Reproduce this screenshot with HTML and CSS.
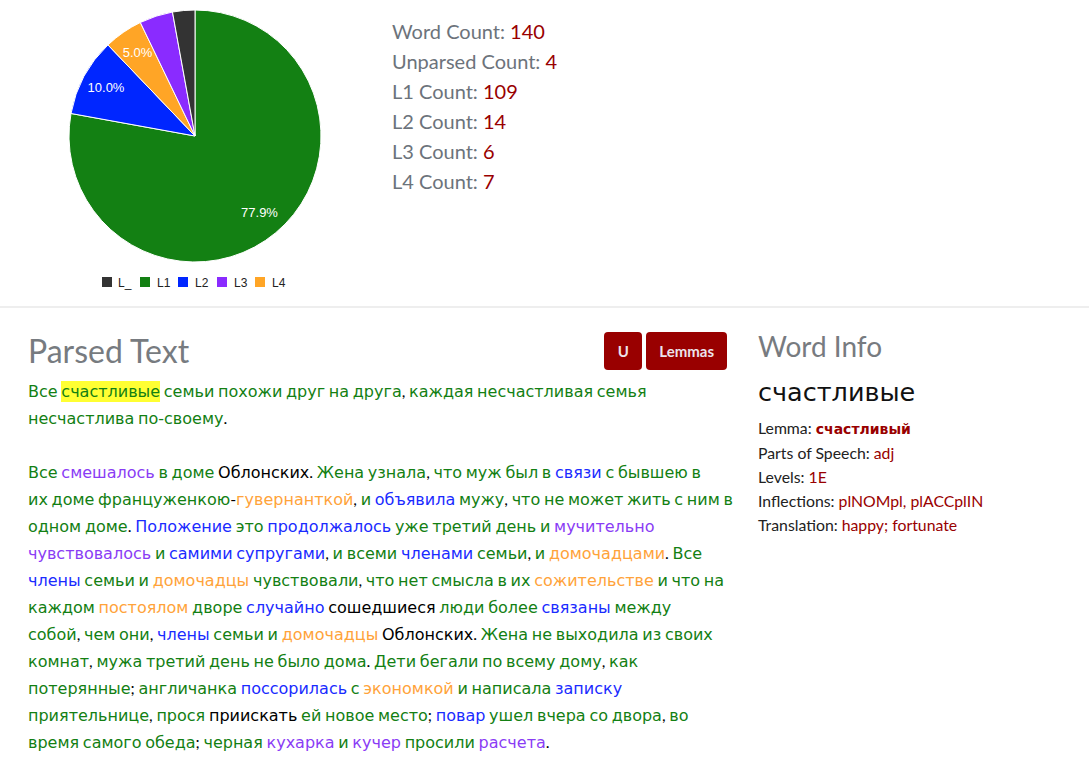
FILE: index.html
```html
<!DOCTYPE html>
<html lang="ru">
<head>
<meta charset="utf-8">
<title>Parsed Text</title>
<link rel="stylesheet" href="styles.css">
</head>
<body>
<section class="summary">
  <div class="chart">
    <svg width="380" height="300" viewBox="0 0 380 300" xmlns="http://www.w3.org/2000/svg">
      <g stroke="#fff" stroke-width="1">
        <path d="M195,136 L195,10 A126,126 0 1 1 71.02,113.49 Z" fill="#138013"/>
        <path d="M195,136 L71.02,113.49 A126,126 0 0 1 107.93,44.92 Z" fill="#0026ff"/>
        <path d="M195,136 L107.93,44.92 A126,126 0 0 1 140.33,22.48 Z" fill="#ffa526"/>
        <path d="M195,136 L140.33,22.48 A126,126 0 0 1 172.49,12.03 Z" fill="#8a2bff"/>
        <path d="M195,136 L172.49,12.03 A126,126 0 0 1 195,10 Z" fill="#333333"/>
      </g>
      <g class="slice-label" text-anchor="middle">
        <text x="259.5" y="217">77.9%</text>
        <text x="106" y="92">10.0%</text>
        <text x="137.5" y="57">5.0%</text>
      </g>
      <g class="legend">
        <rect x="102" y="277" width="10" height="10" fill="#333333"/>
        <text x="118" y="287">L_</text>
        <rect x="140" y="277" width="10" height="10" fill="#138013"/>
        <text x="157" y="287">L1</text>
        <rect x="178" y="277" width="10" height="10" fill="#0026ff"/>
        <text x="195" y="287">L2</text>
        <rect x="217" y="277" width="10" height="10" fill="#8a2bff"/>
        <text x="234" y="287">L3</text>
        <rect x="255" y="277" width="10" height="10" fill="#ffa526"/>
        <text x="272" y="287">L4</text>
      </g>
    </svg>
  </div>
  <ul class="stats">
    <li>Word Count: <span class="num">140</span></li>
    <li>Unparsed Count: <span class="num">4</span></li>
    <li>L1 Count: <span class="num">109</span></li>
    <li>L2 Count: <span class="num">14</span></li>
    <li>L3 Count: <span class="num">6</span></li>
    <li>L4 Count: <span class="num">7</span></li>
  </ul>
</section>

<main class="workspace">
  <section class="parsed">
    <div class="parsed-head">
      <h2 class="title">Parsed Text</h2>
      <div class="actions">
        <button class="btn btn-u">U</button>
        <button class="btn">Lemmas</button>
      </div>
    </div>
    <div class="text">
      <p><span class="g">Все</span> <span class="g hl">счастливые</span> <span class="g">семьи</span> <span class="g">похожи</span> <span class="g">друг</span> <span class="g">на</span> <span class="g">друга</span>, <span class="g">каждая</span> <span class="g">несчастливая</span> <span class="g">семья</span><br>
      <span class="g">несчастлива</span> <span class="g">по-своему</span>.</p>
      <p><span class="g">Все</span> <span class="p">смешалось</span> <span class="g">в</span> <span class="g">доме</span> <span class="k">Облонских</span>. <span class="g">Жена</span> <span class="g">узнала</span>, <span class="g">что</span> <span class="g">муж</span> <span class="g">был</span> <span class="g">в</span> <span class="b">связи</span> <span class="g">с</span> <span class="g">бывшею</span> <span class="g">в</span><br>
      <span class="g">их</span> <span class="g">доме</span> <span class="g">француженкою</span>-<span class="o">гувернанткой</span>, <span class="g">и</span> <span class="b">объявила</span> <span class="g">мужу</span>, <span class="g">что</span> <span class="g">не</span> <span class="g">может</span> <span class="g">жить</span> <span class="g">с</span> <span class="g">ним</span> <span class="g">в</span><br>
      <span class="g">одном</span> <span class="g">доме</span>. <span class="b">Положение</span> <span class="g">это</span> <span class="b">продолжалось</span> <span class="g">уже</span> <span class="g">третий</span> <span class="g">день</span> <span class="g">и</span> <span class="p">мучительно</span><br>
      <span class="p">чувствовалось</span> <span class="g">и</span> <span class="b">самими</span> <span class="b">супругами</span>, <span class="g">и</span> <span class="g">всеми</span> <span class="b">членами</span> <span class="g">семьи</span>, <span class="g">и</span> <span class="o">домочадцами</span>. <span class="g">Все</span><br>
      <span class="b">члены</span> <span class="g">семьи</span> <span class="g">и</span> <span class="o">домочадцы</span> <span class="g">чувствовали</span>, <span class="g">что</span> <span class="g">нет</span> <span class="g">смысла</span> <span class="g">в</span> <span class="g">их</span> <span class="o">сожительстве</span> <span class="g">и</span> <span class="g">что</span> <span class="g">на</span><br>
      <span class="g">каждом</span> <span class="o">постоялом</span> <span class="g">дворе</span> <span class="b">случайно</span> <span class="k">сошедшиеся</span> <span class="g">люди</span> <span class="g">более</span> <span class="b">связаны</span> <span class="g">между</span><br>
      <span class="g">собой</span>, <span class="g">чем</span> <span class="g">они</span>, <span class="b">члены</span> <span class="g">семьи</span> <span class="g">и</span> <span class="o">домочадцы</span> <span class="k">Облонских</span>. <span class="g">Жена</span> <span class="g">не</span> <span class="g">выходила</span> <span class="g">из</span> <span class="g">своих</span><br>
      <span class="g">комнат</span>, <span class="g">мужа</span> <span class="g">третий</span> <span class="g">день</span> <span class="g">не</span> <span class="g">было</span> <span class="g">дома</span>. <span class="g">Дети</span> <span class="g">бегали</span> <span class="g">по</span> <span class="g">всему</span> <span class="g">дому</span>, <span class="g">как</span><br>
      <span class="g">потерянные</span>; <span class="g">англичанка</span> <span class="b">поссорилась</span> <span class="g">с</span> <span class="o">экономкой</span> <span class="g">и</span> <span class="g">написала</span> <span class="b">записку</span><br>
      <span class="g">приятельнице</span>, <span class="g">прося</span> <span class="k">приискать</span> <span class="g">ей</span> <span class="g">новое</span> <span class="g">место</span>; <span class="b">повар</span> <span class="g">ушел</span> <span class="g">вчера</span> <span class="g">со</span> <span class="g">двора</span>, <span class="g">во</span><br>
      <span class="g">время</span> <span class="g">самого</span> <span class="g">обеда</span>; <span class="g">черная</span> <span class="p">кухарка</span> <span class="g">и</span> <span class="p">кучер</span> <span class="g">просили</span> <span class="p">расчета</span>.</p>
    </div>
  </section>
  <aside class="info">
    <h3 class="title info-title">Word Info</h3>
    <div class="word">счастливые</div>
    <ul class="props">
      <li>Lemma: <strong class="val lemma">счастливый</strong></li>
      <li>Parts of Speech: <span class="val">adj</span></li>
      <li>Levels: <span class="val">1E</span></li>
      <li>Inflections: <span class="val">plNOMpl, plACCplIN</span></li>
      <li>Translation: <span class="val">happy; fortunate</span></li>
    </ul>
  </aside>
</main>
</body>
</html>
```
FILE: styles.css
```css
html, body {
  margin: 0;
  padding: 0;
  background: #fff;
}

body {
  font-family: "Lato", "DejaVu Sans", sans-serif;
  color: #212529;
}

.summary {
  display: flex;
  height: 306px;
  border-bottom: 2px solid #eeeeee;
}

.chart {
  width: 380px;
  flex: none;
}

.chart svg {
  display: block;
}

.slice-label text {
  font-family: "Liberation Sans", Arial, sans-serif;
  font-size: 13px;
  fill: #ffffff;
}

.legend text {
  font-family: "Liberation Sans", Arial, sans-serif;
  font-size: 12px;
  fill: #222222;
}

.stats {
  list-style: none;
  margin: 0 0 0 12px;
  padding: 16px 0 0;
  font-size: 20px;
  line-height: 30px;
  color: #6c737b;
}

.num {
  color: #990000;
}

.workspace {
  display: grid;
  grid-template-columns: 699px 1fr;
  column-gap: 31px;
  padding: 24px 28px 0;
}

.parsed-head {
  display: flex;
  align-items: center;
  justify-content: space-between;
  height: 38px;
}

.title {
  margin: 0;
  font-weight: 400;
  color: #777b80;
  line-height: 1.2;
}

.parsed-head .title {
  font-size: 32px;
}

.actions {
  display: flex;
  gap: 4px;
}

.btn {
  font-family: "Lato", "Liberation Sans", sans-serif;
  font-weight: 700;
  font-size: 15px;
  color: #ece4ec;
  background: #990000;
  border: none;
  border-radius: 4px;
  height: 38px;
  padding: 0 13px;
  cursor: pointer;
}

.btn-u {
  width: 38px;
  padding: 0;
}

.text {
  margin-top: 7px;
  font-size: 16px;
  line-height: 27px;
  word-spacing: -0.4px;
  color: #000;
}

.text p {
  margin: 0 0 27px;
  white-space: nowrap;
}

.text span {
  font-family: "DejaVu Sans", sans-serif;
  line-height: 25px;
}

.g { color: #138013; }
.b { color: #1a2bff; }
.p { color: #8a3cf5; }
.o { color: #ffa33a; }
.k { color: #000000; }

.hl {
  background: #ffff33;
  padding: 1px 0;
}

.info-title {
  font-size: 28px;
  margin-top: -2px;
}

.word {
  font-family: "DejaVu Sans", sans-serif;
  font-size: 25.5px;
  line-height: 34px;
  color: #111;
  margin-top: 11px;
}

.props {
  list-style: none;
  margin: 7px 0 0;
  padding: 0;
  font-size: 15.8px;
  line-height: 24px;
  color: #222;
}

.val {
  color: #990000;
}

.lemma {
  font-weight: 700;
  font-family: "DejaVu Sans", sans-serif;
  font-size: 14px;
}
```
